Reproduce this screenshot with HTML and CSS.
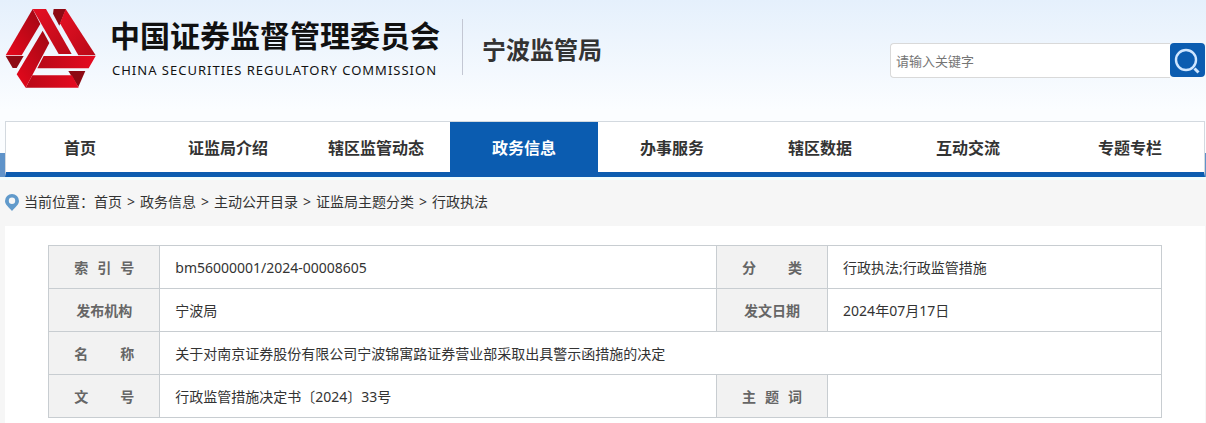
FILE: index.html
```html
<!DOCTYPE html>
<html lang="zh-CN">
<head>
    <meta charset="UTF-8">
    <meta name="viewport" content="width=device-width, initial-scale=1.0">
    <title>宁波监管局 - 中国证券监督管理委员会</title>
    <link rel="stylesheet" href="styles.css">
</head>
<body>
    <header class="header">
        <div class="header-top">
            <a href="/" class="logo">
                <svg class="logo-mark" viewBox="15 24 276 240" aria-hidden="true">
                    <defs>
                        <linearGradient id="arm" x1="0" y1="1" x2="1" y2="0">
                            <stop offset="0" stop-color="#e8081c"/>
                            <stop offset="1" stop-color="#a00814"/>
                        </linearGradient>
                        <linearGradient id="band" x1="0" y1="0" x2="1" y2="1">
                            <stop offset="0" stop-color="#e61024"/>
                            <stop offset="1" stop-color="#b80917"/>
                        </linearGradient>
                        <linearGradient id="flat" x1="0" y1="0" x2="1" y2="0">
                            <stop offset="0" stop-color="#b80917"/>
                            <stop offset="1" stop-color="#e60a20"/>
                        </linearGradient>
                    </defs>
                    <path fill="url(#arm)" d="M98 27l23 45-56 94H17z"/>
                    <path fill="#8d0a14" d="M17 168h54l-21 36H38z"/>
                    <path fill="url(#band)" d="M98 27h40l77 135h-39z"/>
                    <path fill="#8d0a14" d="M161 27h37l-20 50-19-36z"/>
                    <path fill="url(#band)" d="M197 27l90 139h-52l-55-96z"/>
                    <path fill="url(#flat)" d="M131 168h156l-21 37H112z"/>
                    <path fill="#8d0a14" d="M205 213h51l-21 48z"/>
                    <path fill="url(#flat)" d="M97 226h119l20 37H77z"/>
                    <path fill="url(#arm)" d="M128 92l20 37-71 134-27-40z"/>
                </svg>
                <span class="logo-text">
                    <span class="logo-cn">中国证券监督管理委员会</span>
                    <span class="logo-en">CHINA SECURITIES REGULATORY COMMISSION</span>
                </span>
            </a>
            <h1 class="bureau">宁波监管局</h1>
            <form class="search" action="/search">
                <input type="text" name="q" placeholder="请输入关键字" aria-label="请输入关键字">
                <button type="submit" aria-label="搜索">
                    <svg viewBox="0 0 35 34" aria-hidden="true">
                        <circle cx="16" cy="17" r="10" fill="none" stroke="#cfe6ff" stroke-width="2.4"/>
                        <path d="M24.500 25.500l4 4" stroke="#cfe6ff" stroke-width="3"/>
                    </svg>
                </button>
            </form>
        </div>
        <nav class="nav">
            <a href="#">首页</a>
            <a href="#">证监局介绍</a>
            <a href="#">辖区监管动态</a>
            <a href="#" class="active">政务信息</a>
            <a href="#">办事服务</a>
            <a href="#">辖区数据</a>
            <a href="#">互动交流</a>
            <a href="#">专题专栏</a>
        </nav>
    </header>

    <div class="position">
        <svg class="pin" viewBox="0 0 14 17" aria-hidden="true">
            <path fill="#619acb" fill-rule="evenodd" d="M7 0a7 7 0 0 1 7 7c0 3.500-3.500 6-7 10C3.500 13 0 10.500 0 7a7 7 0 0 1 7-7zm0 3.600a3.200 3.200 0 1 0 0 6.400 3.200 3.200 0 0 0 0-6.400z"/>
        </svg>
        <span>当前位置：</span>
        <ol class="crumbs">
            <li><a href="#">首页</a></li>
            <li><a href="#">政务信息</a></li>
            <li><a href="#">主动公开目录</a></li>
            <li><a href="#">证监局主题分类</a></li>
            <li><a href="#">行政执法</a></li>
        </ol>
    </div>

    <main class="content">
        <table class="info">
            <tr>
                <th><span class="spread">索 引 号</span></th>
                <td>bm56000001/2024-00008605</td>
                <th><span class="spread">分 类</span></th>
                <td>行政执法;行政监管措施</td>
            </tr>
            <tr>
                <th>发布机构</th>
                <td>宁波局</td>
                <th>发文日期</th>
                <td>2024年07月17日</td>
            </tr>
            <tr>
                <th><span class="spread">名 称</span></th>
                <td colspan="3">关于对南京证券股份有限公司宁波锦寓路证券营业部采取出具警示函措施的决定</td>
            </tr>
            <tr>
                <th><span class="spread">文 号</span></th>
                <td>行政监管措施决定书〔2024〕33号</td>
                <th><span class="spread">主 题 词</span></th>
                <td></td>
            </tr>
        </table>
    </main>
</body>
</html>
```
FILE: styles.css
```css
* {
    margin: 0;
    padding: 0;
    box-sizing: border-box;
}

body {
    font-family: "Noto Sans", "Noto Sans CJK SC", sans-serif;
    font-size: 14px;
    line-height: 20px;
    color: #333;
    background: #f6f6f6;
}

a {
    color: inherit;
    text-decoration: none;
}

/* header */
.header {
    padding: 0 1px 0 5px;
    background:
        linear-gradient(#5f93c9, #5f93c9) bottom / 100% 24px no-repeat,
        linear-gradient(#e5f0fc, #fbfdff 110px);
}

.header-top {
    display: flex;
    align-items: flex-start;
    height: 121px;
}

.logo {
    display: flex;
    gap: 13px;
    padding-top: 8px;
    color: #111;
}

.logo-mark {
    width: 92px;
    height: 80px;
}

.logo-text {
    display: flex;
    flex-direction: column;
    padding-top: 8px;
    white-space: nowrap;
}

.logo-cn {
    font-size: 30px;
    font-weight: 700;
    line-height: 40px;
}

.logo-en {
    padding-left: 2px;
    font-size: 13px;
    line-height: 28px;
    letter-spacing: 1px;
}

.bureau {
    margin: 19px 0 0 22px;
    padding: 6px 0 0 19px;
    border-left: 1px solid #c3c7d3;
    font-size: 24px;
    line-height: 50px;
    white-space: nowrap;
}

.search {
    display: flex;
    width: 315px;
    height: 35px;
    margin: 43px 0 0 auto;
}

.search input {
    flex: 1;
    min-width: 0;
    padding: 0 5px;
    border: 1px solid #d9d9d9;
    border-right: none;
    border-radius: 4px 0 0 4px;
    background: #fff;
    font: inherit;
    outline: none;
}

.search input::placeholder {
    color: #757575;
    font-size: 13px;
}

.search button {
    width: 35px;
    height: 34px;
    border: none;
    border-radius: 4px;
    background: #0b5cb0;
    cursor: pointer;
}

.search svg {
    display: block;
    width: 100%;
}

/* main menu */
.nav {
    display: grid;
    grid-template-columns: repeat(7, 148fr) 162fr;
    border: 1px solid #d3d9df;
    border-bottom: 5px solid #0b5cb0;
    background: #fff;
}

.nav a {
    padding-top: 2px;
    font-size: 16px;
    font-weight: 700;
    line-height: 48px;
    text-align: center;
    white-space: nowrap;
}

.nav a:last-child {
    padding-left: 14px;
}

.nav .active {
    background: #0b5cb0;
    color: #fff;
}

/* breadcrumb */
.position {
    display: flex;
    align-items: center;
    height: 49px;
    padding: 0 0 2px 5px;
    border-top: 3px solid #effcfd;
}

.pin {
    width: 14px;
    height: 17px;
    margin-right: 5px;
}

.crumbs {
    display: flex;
    list-style: none;
}

.crumbs li + li::before {
    content: ">";
    margin: 0 5px;
}

/* document info */
.content {
    margin: 0 1px 0 5px;
    padding: 19px 43px;
    background: #fff;
}

.info {
    width: 100%;
    border-collapse: collapse;
    table-layout: fixed;
}

.info th,
.info td {
    height: 43px;
    padding-top: 2px;
    border: 1px solid #c8cdd1;
}

.info th {
    width: 10%;
    background: #f2f2f2;
    color: #666;
    text-align: center;
}

.info td {
    width: 30%;
    padding-left: 15px;
}

.info th + td:nth-child(2) {
    width: 50%;
}

.spread {
    display: inline-block;
    width: 60px;
    text-align-last: justify;
}
```
